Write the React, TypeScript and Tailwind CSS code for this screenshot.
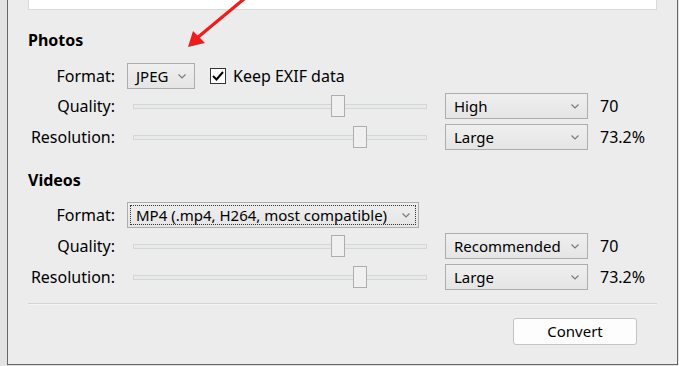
import React from "react";

const font = { fontFamily: '"Noto Sans", "Liberation Sans", sans-serif' };

const Chevron = () => (
    <svg width="8" height="5" viewBox="0 0 8 5" className="shrink-0">
        <polyline points="0.5,0.5 4,4 7.5,0.5" fill="none" stroke="#7a7a7a" strokeWidth="1.2" />
    </svg>
);

const Select = ({ value, width, focused = false }: { value: string; width: string; focused?: boolean }) => (
    <div className={`${width} h-[26px] shrink-0 border border-[#adadad] bg-gradient-to-b from-[#efefef] to-[#e5e5e5] p-[2px]`}>
        <div
            className={`flex h-full items-center justify-between gap-[4px] pl-[5px] pr-[5px] ${
                focused ? "border border-dotted border-[#333]" : "border border-transparent"
            }`}
        >
            <span className="whitespace-nowrap text-[15px] leading-none">{value}</span>
            <Chevron />
        </div>
    </div>
);

const Slider = ({ thumb }: { thumb: string }) => (
    <div className="relative h-[26px] w-[306px] shrink-0">
        <div className="absolute left-[6px] right-[6px] top-[11px] h-[5px] border border-[#d6d6d6] bg-[#e7eaea]" />
        <div className={`absolute ${thumb} top-[2px] h-[22px] w-[14px] border border-[#adadad] bg-[#f0f0f0]`} />
    </div>
);

const Label = ({ children }: { children: React.ReactNode }) => (
    <div className="w-[87px] shrink-0 text-right">{children}</div>
);

const SliderRow = ({ label, thumb, select, selectValue }: { label: string; thumb: string; select: string; selectValue: string }) => (
    <div className="flex h-[26px] items-center gap-[12px]">
        <Label>{label}</Label>
        <Slider thumb={thumb} />
        <Select value={select} width="w-[143px]" />
        <span>{selectValue}</span>
    </div>
);

export default function App() {
    return (
        <div className="flex h-[366px] w-[679px] bg-[#e3e3e3] pb-[1px] pl-[7px] pr-[1px] text-[16px] text-black" style={font}>
            <div className="relative flex flex-1 flex-col border-b border-l border-r border-[#666] bg-[#ececec] px-[20px]">
                <div className="h-[10px] border-b border-l border-r border-[#dadada] bg-white" />

                <div className="mt-[20px] h-[20px] font-bold leading-[20px]">Photos</div>
                <div className="mt-[13px] flex h-[26px] items-center gap-[12px]">
                    <Label>Format:</Label>
                    <Select value="JPEG" width="w-[68px]" />
                    <div className="ml-[3px] flex items-center gap-[7px]">
                        <div className="flex h-[16px] w-[16px] items-center justify-center border border-[#333] bg-white">
                            <svg width="12" height="10" viewBox="0 0 12 10">
                                <polyline points="1,5 4.5,8.5 11,1" fill="none" stroke="#000" strokeWidth="2" />
                            </svg>
                        </div>
                        <span>Keep EXIF data</span>
                    </div>
                </div>
                <div className="mt-[4px]">
                    <SliderRow label="Quality:" thumb="left-[204px]" select="High" selectValue="70" />
                </div>
                <div className="mt-[5px]">
                    <SliderRow label="Resolution:" thumb="left-[226px]" select="Large" selectValue="73.2%" />
                </div>

                <div className="mt-[20px] h-[20px] font-bold leading-[20px]">Videos</div>
                <div className="mt-[12px] flex h-[26px] items-center gap-[12px]">
                    <Label>Format:</Label>
                    <Select value="MP4 (.mp4, H264, most compatible)" width="w-[292px]" focused />
                </div>
                <div className="mt-[5px]">
                    <SliderRow label="Quality:" thumb="left-[204px]" select="Recommended" selectValue="70" />
                </div>
                <div className="mt-[5px]">
                    <SliderRow label="Resolution:" thumb="left-[226px]" select="Large" selectValue="73.2%" />
                </div>

                <div className="mt-[13px] h-[2px] border-t border-[#d4d4d4] bg-[#f4f4f4]" />

                <div className="mt-[13px] flex justify-end pr-[20px]">
                    <button className="h-[27px] w-[124px] rounded-[3px] border border-[#c4c4c4] bg-[#fdfdfd] text-[15px]">
                        Convert
                    </button>
                </div>
            </div>

            <svg className="absolute left-0 top-0" width="679" height="366" viewBox="0 0 679 366" style={{ pointerEvents: "none" }}>
                <path d="M244,-1 L197,38" stroke="#f01c1c" strokeWidth="3.2" strokeLinecap="round" />
                <polygon points="188,47 193,31 205,43" fill="#f01c1c" />
            </svg>
        </div>
    );
}
